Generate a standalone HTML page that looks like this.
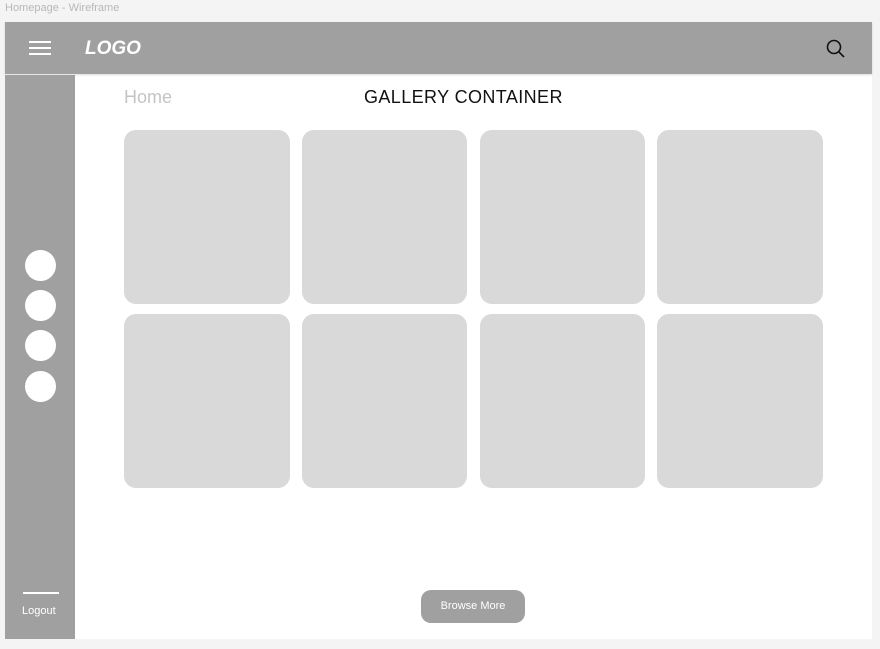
<!DOCTYPE html>
<html><head><style>
body{margin:0;width:880px;height:649px;background:#f4f4f4;position:relative;overflow:hidden;font-family:"Liberation Sans",sans-serif}
.a{position:absolute}
.card{position:absolute;background:#d9d9d9;border-radius:12px}
.c{position:absolute;left:25px;width:31px;height:31px;border-radius:50%;background:#fff}
</style></head><body>
<div class="a" style="left:5px;top:2px;font-size:11px;color:#b8b8b8">Homepage - Wireframe</div>
<div class="a" style="left:5px;top:22px;width:867px;height:617px;background:#fff"></div>
<div class="a" style="left:5px;top:22px;width:867px;height:52px;background:#a0a0a0;box-shadow:0 1px 2px rgba(0,0,0,.15)"></div>
<div class="a" style="left:29px;top:41px;width:22px;height:1.5px;background:#fff"></div>
<div class="a" style="left:29px;top:47px;width:22px;height:1.5px;background:#fff"></div>
<div class="a" style="left:29px;top:53px;width:22px;height:1.5px;background:#fff"></div>
<div class="a" style="left:85px;top:38px;font-size:19px;font-weight:bold;font-style:italic;color:#fff">LOGO</div>
<svg class="a" style="left:826px;top:39px" width="20" height="20" viewBox="0 0 20 20"><circle cx="8" cy="8" r="6.5" fill="none" stroke="#111" stroke-width="1.6"/><line x1="12.8" y1="12.8" x2="18" y2="18" stroke="#111" stroke-width="1.6"/></svg>
<div class="a" style="left:5px;top:75px;width:70px;height:564px;background:#a0a0a0"></div>
<div class="c" style="top:250px"></div><div class="c" style="top:290px"></div><div class="c" style="top:330px"></div><div class="c" style="top:371px"></div>
<div class="a" style="left:23px;top:592px;width:36px;height:1.5px;background:#fff"></div>
<div class="a" style="left:22px;top:605px;font-size:11px;color:#fff">Logout</div>
<div class="a" style="left:124px;top:87px;font-size:18px;color:#c4c4c4">Home</div>
<div class="a" style="left:364px;top:87px;font-size:18px;color:#111;letter-spacing:0.4px">GALLERY CONTAINER</div>
<div class="card" style="left:124px;top:130px;width:166px;height:174px"></div>
<div class="card" style="left:302px;top:130px;width:165px;height:174px"></div>
<div class="card" style="left:480px;top:130px;width:165px;height:174px"></div>
<div class="card" style="left:657px;top:130px;width:166px;height:174px"></div>
<div class="card" style="left:124px;top:314px;width:166px;height:174px"></div>
<div class="card" style="left:302px;top:314px;width:165px;height:174px"></div>
<div class="card" style="left:480px;top:314px;width:165px;height:174px"></div>
<div class="card" style="left:657px;top:314px;width:166px;height:174px"></div>
<div class="a" style="left:421px;top:590px;width:104px;height:33px;border-radius:10px;background:#a0a0a0;color:#fff;font-size:11px;text-align:center;line-height:33px">Browse More</div>
</body></html>
